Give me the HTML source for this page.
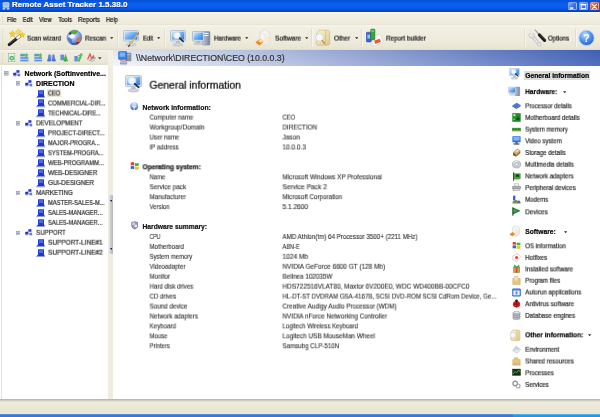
<!DOCTYPE html>
<html lang="en"><head><meta charset="utf-8"><title>Remote Asset Tracker 1.5.38.0</title>
<style>
*{margin:0;padding:0;box-sizing:border-box}
html,body{width:600px;height:417px;overflow:hidden;background:#fff}
body{position:relative;font-family:"Liberation Sans",sans-serif;font-size:6.7px;color:#111;line-height:1}
.a{position:absolute;white-space:nowrap}
.t{position:absolute;white-space:nowrap;line-height:10px;height:10px;transform-origin:0 50%;will-change:transform;-webkit-text-stroke:.2px currentColor}
.b{font-weight:bold}
svg.a{filter:blur(.3px)}
.g{opacity:.55}
#title{left:0;top:0;width:600px;height:11.6px;background:linear-gradient(#0a50d4 0,#0656e4 1.5px,#0a5eee 4px,#0a5eee 7px,#0652e0 9.5px,#0340c0 11.6px)}
#menu{left:0;top:11.6px;width:600px;height:13px;background:linear-gradient(#fdfdfb 0,#f3f1e7 1.6px,#f0eee1 6px,#eeebdc 12px,#e2dfcf 13px)}
#tb1{left:0;top:24.6px;width:600px;height:25.4px;background:linear-gradient(#f6f5ec 0,#f1efe3 3px,#eeebdc 16px,#e7e4d3 24px,#d3d0be 25.4px)}
#tb2{left:0;top:50px;width:108.4px;height:15.4px;background:linear-gradient(#f6f5ee 0,#efecde 2px,#ebe8d7 12px,#dedbc9 15.4px);border-radius:0 1.5px 1.5px 0;box-shadow:.6px 0 0 #d8d5c4}
#hdr{left:112.4px;top:50px;width:487.6px;height:15.6px;background:linear-gradient(rgba(0,10,60,.07),rgba(255,255,255,.06)),linear-gradient(90deg,#f4f6fb 0,#4666bb 100%)}
#tree{left:1px;top:65.6px;width:107.3px;height:333.2px;background:#fff;border-left:1px solid #e6e4d8}
#split{left:108.3px;top:50px;width:4.7px;height:348.6px;background:linear-gradient(#f3f2ea 0,#f1efe5 15px,#efede1 16px)}
#status{left:0;top:398.8px;width:600px;height:15px;background:linear-gradient(#b2b0a2 0,#c4c2b4 1px,#e2dfd0 2.2px,#eeece0 3.4px,#ece8d6 7px,#ebe7d4 14px,#e4e6e6 15px)}
#task{left:0;top:413.6px;width:600px;height:3.4px;background:linear-gradient(#6a9ce8,#3c78d8 40%,#3a74d4)}
#tray{left:512.5px;top:413.6px;width:87.5px;height:3.4px;background:linear-gradient(#6abcf4,#1f9cee 40%,#1c94e6)}
</style></head>
<body>
<div class="a" id="title"></div>
<div class="a" id="menu"></div>
<div class="a" id="tb1"></div>
<div class="a" id="tb2"></div>
<div class="a" id="hdr"></div>
<div class="a" id="split"></div>
<div class="a" id="tree"></div>
<div class="a" id="status"></div>
<div class="a" id="task"></div>
<div class="a" id="tray"></div>
<div class="t b" style="transform:translate(0px,0.1px) scaleX(1.031);left:12px;top:0px;font-size:7.8px;color:#fff;text-shadow:.5px .5px 0 rgba(0,30,120,.6);">Remote Asset Tracker 1.5.38.0</div>
<div class="t " style="transform:translate(0.9px,0px) scaleX(0.900);left:6px;top:15px;">File</div>
<div class="t " style="transform:translate(0.7px,0px) scaleX(0.867);left:22px;top:15px;">Edit</div>
<div class="t " style="transform:translate(0.9px,0px) scaleX(0.890);left:38px;top:15px;">View</div>
<div class="t " style="transform:translate(0.3px,0px) scaleX(0.877);left:58px;top:15px;">Tools</div>
<div class="t " style="transform:translate(0px,0px) scaleX(0.939);left:78px;top:15px;">Reports</div>
<div class="t " style="transform:translate(0px,0px) scaleX(0.872);left:106px;top:15px;">Help</div>
<div class="t " style="transform:translate(0px,0.6px) scaleX(0.933);left:27px;top:33px;">Scan wizard</div>
<div class="t " style="transform:translate(0px,0.6px) scaleX(0.926);left:85px;top:33px;">Rescan</div>
<div class="t " style="transform:translate(0px,0.6px) scaleX(0.867);left:143px;top:33px;">Edit</div>
<div class="t " style="transform:translate(0px,0.6px) scaleX(0.931);left:214px;top:33px;">Hardware</div>
<div class="t " style="transform:translate(0px,0.6px) scaleX(0.985);left:275px;top:33px;">Software</div>
<div class="t " style="transform:translate(0px,0.6px) scaleX(0.956);left:334px;top:33px;">Other</div>
<div class="t " style="transform:translate(0px,0.6px) scaleX(0.952);left:386px;top:33px;">Report builder</div>
<div class="t " style="transform:translate(0px,0.6px) scaleX(0.911);left:548px;top:33px;">Options</div>
<div class="t " style="transform:translate(0px,0.2px) scaleX(1.006);left:136px;top:53px;font-size:8.7px;color:#333;">\\Network\DIRECTION\CEO (10.0.0.3)</div>
<div class="t " style="transform:translate(0.4px,0.7px) scaleX(0.993);left:149px;top:79px;font-size:10.5px;color:#000;-webkit-text-stroke:.22px #000;">General information</div>
<div class="t b" style="transform:translate(0.5px,0.6px) scaleX(1.016);left:142px;top:102px;">Network information:</div>
<div class="t " style="transform:translate(0.6px,0.6px) scaleX(0.911);left:149px;top:112px;color:#2c2c2c;-webkit-text-stroke-width:.1px;">Computer name</div>
<div class="t " style="transform:translate(0.5px,0.6px) scaleX(0.876);left:282px;top:112px;color:#2c2c2c;-webkit-text-stroke-width:.1px;">CEO</div>
<div class="t " style="transform:translate(0.6px,0.53px) scaleX(0.957);left:149px;top:122px;color:#2c2c2c;-webkit-text-stroke-width:.1px;">Workgroup/Domain</div>
<div class="t " style="transform:translate(0.5px,0.53px) scaleX(0.938);left:282px;top:122px;color:#2c2c2c;-webkit-text-stroke-width:.1px;">DIRECTION</div>
<div class="t " style="transform:translate(0.6px,0.46px) scaleX(0.902);left:149px;top:132px;color:#2c2c2c;-webkit-text-stroke-width:.1px;">User name</div>
<div class="t " style="transform:translate(0.5px,0.46px) scaleX(0.974);left:282px;top:132px;color:#2c2c2c;-webkit-text-stroke-width:.1px;">Jason</div>
<div class="t " style="transform:translate(0.6px,0.39px) scaleX(0.910);left:149px;top:142px;color:#2c2c2c;-webkit-text-stroke-width:.1px;">IP address</div>
<div class="t " style="transform:translate(0.5px,0.39px) scaleX(0.968);left:282px;top:142px;color:#2c2c2c;-webkit-text-stroke-width:.1px;">10.0.0.3</div>
<div class="t b" style="transform:translate(0.5px,0.3px) scaleX(0.996);left:142px;top:162px;">Operating system:</div>
<div class="t " style="transform:translate(0.6px,0.3px) scaleX(0.880);left:149px;top:172px;color:#2c2c2c;-webkit-text-stroke-width:.1px;">Name</div>
<div class="t " style="transform:translate(0.5px,0.3px) scaleX(0.942);left:282px;top:172px;color:#2c2c2c;-webkit-text-stroke-width:.1px;">Microsoft Windows XP Professional</div>
<div class="t " style="transform:translate(0.6px,0.23px) scaleX(0.953);left:149px;top:182px;color:#2c2c2c;-webkit-text-stroke-width:.1px;">Service pack</div>
<div class="t " style="transform:translate(0.5px,0.23px) scaleX(0.995);left:282px;top:182px;color:#2c2c2c;-webkit-text-stroke-width:.1px;">Service Pack 2</div>
<div class="t " style="transform:translate(0.6px,0.16px) scaleX(0.919);left:149px;top:192px;color:#2c2c2c;-webkit-text-stroke-width:.1px;">Manufacturer</div>
<div class="t " style="transform:translate(0.5px,0.16px) scaleX(0.932);left:282px;top:192px;color:#2c2c2c;-webkit-text-stroke-width:.1px;">Microsoft Corporation</div>
<div class="t " style="transform:translate(0.6px,0.09px) scaleX(0.896);left:149px;top:202px;color:#2c2c2c;-webkit-text-stroke-width:.1px;">Version</div>
<div class="t " style="transform:translate(0.5px,0.09px) scaleX(0.987);left:282px;top:202px;color:#2c2c2c;-webkit-text-stroke-width:.1px;">5.1.2600</div>
<div class="t b" style="transform:translate(0.5px,0.0px) scaleX(1.003);left:142px;top:222px;">Hardware summary:</div>
<div class="t " style="transform:translate(0.6px,0.0px) scaleX(0.765);left:149px;top:232px;color:#2c2c2c;-webkit-text-stroke-width:.1px;">CPU</div>
<div class="t " style="transform:translate(0.5px,0.0px) scaleX(0.929);left:282px;top:232px;color:#2c2c2c;-webkit-text-stroke-width:.1px;">AMD Athlon(tm) 64 Processor 3500+ (2211 MHz)</div>
<div class="t " style="transform:translate(0.6px,0.93px) scaleX(0.902);left:149px;top:241px;color:#2c2c2c;-webkit-text-stroke-width:.1px;">Motherboard</div>
<div class="t " style="transform:translate(0.5px,0.93px) scaleX(0.873);left:282px;top:241px;color:#2c2c2c;-webkit-text-stroke-width:.1px;">A8N-E</div>
<div class="t " style="transform:translate(0.6px,0.86px) scaleX(0.880);left:149px;top:251px;color:#2c2c2c;-webkit-text-stroke-width:.1px;">System memory</div>
<div class="t " style="transform:translate(0.5px,0.86px) scaleX(0.987);left:282px;top:251px;color:#2c2c2c;-webkit-text-stroke-width:.1px;">1024 Mb</div>
<div class="t " style="transform:translate(0.6px,0.79px) scaleX(0.902);left:149px;top:261px;color:#2c2c2c;-webkit-text-stroke-width:.1px;">Videoadapter</div>
<div class="t " style="transform:translate(0.5px,0.79px) scaleX(0.967);left:282px;top:261px;color:#2c2c2c;-webkit-text-stroke-width:.1px;">NVIDIA GeForce 6600 GT (128 Mb)</div>
<div class="t " style="transform:translate(0.6px,0.72px) scaleX(0.919);left:149px;top:271px;color:#2c2c2c;-webkit-text-stroke-width:.1px;">Monitor</div>
<div class="t " style="transform:translate(0.5px,0.72px) scaleX(0.943);left:282px;top:271px;color:#2c2c2c;-webkit-text-stroke-width:.1px;">Belinea 102035W</div>
<div class="t " style="transform:translate(0.6px,0.65px) scaleX(0.913);left:149px;top:281px;color:#2c2c2c;-webkit-text-stroke-width:.1px;">Hard disk drives</div>
<div class="t " style="transform:translate(0.5px,0.65px) scaleX(0.966);left:282px;top:281px;color:#2c2c2c;-webkit-text-stroke-width:.1px;">HDS722516VLAT80, Maxtor 6V200E0, WDC WD400BB-00CFC0</div>
<div class="t " style="transform:translate(0.6px,0.58px) scaleX(0.903);left:149px;top:291px;color:#2c2c2c;-webkit-text-stroke-width:.1px;">CD drives</div>
<div class="t " style="transform:translate(0.5px,0.58px) scaleX(0.914);left:282px;top:291px;color:#2c2c2c;-webkit-text-stroke-width:.1px;">HL-DT-ST DVDRAM GSA-4167B, SCSI DVD-ROM SCSI CdRom Device, Ge...</div>
<div class="t " style="transform:translate(0.6px,0.51px) scaleX(0.933);left:149px;top:301px;color:#2c2c2c;-webkit-text-stroke-width:.1px;">Sound device</div>
<div class="t " style="transform:translate(0.5px,0.51px) scaleX(0.948);left:282px;top:301px;color:#2c2c2c;-webkit-text-stroke-width:.1px;">Creative Audigy Audio Processor (WDM)</div>
<div class="t " style="transform:translate(0.6px,0.44px) scaleX(0.925);left:149px;top:311px;color:#2c2c2c;-webkit-text-stroke-width:.1px;">Network adapters</div>
<div class="t " style="transform:translate(0.5px,0.44px) scaleX(0.944);left:282px;top:311px;color:#2c2c2c;-webkit-text-stroke-width:.1px;">NVIDIA nForce Networking Controller</div>
<div class="t " style="transform:translate(0.6px,0.37px) scaleX(0.918);left:149px;top:321px;color:#2c2c2c;-webkit-text-stroke-width:.1px;">Keyboard</div>
<div class="t " style="transform:translate(0.5px,0.37px) scaleX(0.907);left:282px;top:321px;color:#2c2c2c;-webkit-text-stroke-width:.1px;">Logitech Wireless Keyboard</div>
<div class="t " style="transform:translate(0.6px,0.3px) scaleX(0.892);left:149px;top:331px;color:#2c2c2c;-webkit-text-stroke-width:.1px;">Mouse</div>
<div class="t " style="transform:translate(0.5px,0.3px) scaleX(0.956);left:282px;top:331px;color:#2c2c2c;-webkit-text-stroke-width:.1px;">Logitech USB MouseMan Wheel</div>
<div class="t " style="transform:translate(0.6px,0.23px) scaleX(0.876);left:149px;top:341px;color:#2c2c2c;-webkit-text-stroke-width:.1px;">Printers</div>
<div class="t " style="transform:translate(0.5px,0.23px) scaleX(0.924);left:282px;top:341px;color:#2c2c2c;-webkit-text-stroke-width:.1px;">Samsubg CLP-510N</div>
<div class="t b" style="transform:translate(0.6px,0.6px) scaleX(1.042);left:24px;top:68px;color:#000;">Network (Softinventive...</div>
<div class="t b" style="transform:translate(0.1px,0.55px) scaleX(1.044);left:36px;top:78px;color:#000;">DIRECTION</div>
<div class="a" style="left:46.6px;top:89.40px;width:14.6px;height:8px;background:#e9e6d4"></div>
<div class="t " style="transform:translate(0px,0.5px) scaleX(0.834);left:48px;top:88px;color:#2a2a2a;">CEO</div>
<div class="t " style="transform:translate(0px,0.45px) scaleX(0.891);left:48px;top:98px;color:#2a2a2a;">COMMERCIAL-DIR...</div>
<div class="t " style="transform:translate(0px,0.4px) scaleX(0.856);left:48px;top:108px;color:#2a2a2a;">TECHNICAL-DIRE...</div>
<div class="t " style="transform:translate(0.1px,0.35px) scaleX(0.918);left:36px;top:118px;color:#2a2a2a;">DEVELOPMENT</div>
<div class="t " style="transform:translate(0px,0.3px) scaleX(0.901);left:48px;top:128px;color:#2a2a2a;">PROJECT-DIRECT...</div>
<div class="t " style="transform:translate(0px,0.25px) scaleX(0.860);left:48px;top:138px;color:#2a2a2a;">MAJOR-PROGRA...</div>
<div class="t " style="transform:translate(0px,0.2px) scaleX(0.863);left:48px;top:148px;color:#2a2a2a;">SYSTEM-PROGRA...</div>
<div class="t " style="transform:translate(0px,0.15px) scaleX(0.886);left:48px;top:158px;color:#2a2a2a;">WEB-PROGRAMM...</div>
<div class="t " style="transform:translate(0px,0.1px) scaleX(0.945);left:48px;top:168px;color:#2a2a2a;">WEB-DESIGNER</div>
<div class="t " style="transform:translate(0px,0.05px) scaleX(0.938);left:48px;top:178px;color:#2a2a2a;">GUI-DESIGNER</div>
<div class="t " style="transform:translate(0.1px,0.0px) scaleX(0.925);left:36px;top:188px;color:#2a2a2a;">MARKETING</div>
<div class="t " style="transform:translate(0px,0.95px) scaleX(0.870);left:48px;top:197px;color:#2a2a2a;">MASTER-SALES-M...</div>
<div class="t " style="transform:translate(0px,0.9px) scaleX(0.864);left:48px;top:207px;color:#2a2a2a;">SALES-MANAGER...</div>
<div class="t " style="transform:translate(0px,0.85px) scaleX(0.864);left:48px;top:217px;color:#2a2a2a;">SALES-MANAGER...</div>
<div class="t " style="transform:translate(0.1px,0.8px) scaleX(0.919);left:36px;top:227px;color:#2a2a2a;">SUPPORT</div>
<div class="t " style="transform:translate(0px,0.75px) scaleX(0.969);left:48px;top:237px;color:#2a2a2a;">SUPPORT-LINE#1</div>
<div class="t " style="transform:translate(0px,0.7px) scaleX(0.969);left:48px;top:247px;color:#2a2a2a;">SUPPORT-LINE#2</div>
<div class="a" style="left:524.4px;top:71px;width:66px;height:9px;background:#dcdcdc;filter:blur(.3px)"></div>
<div class="t b" style="transform:translate(0.3px,0.8px) scaleX(1.004);left:525px;top:70px;color:#000;">General information</div>
<div class="t b" style="transform:translate(0.2px,0.1px) scaleX(0.978);left:525px;top:87px;color:#000;">Hardware:</div>
<div class="t " style="transform:translate(0.2px,0.3px) scaleX(0.906);left:525px;top:101px;color:#2a2a2a;">Processor details</div>
<div class="t " style="transform:translate(0.2px,0.9px) scaleX(0.922);left:525px;top:112px;color:#2a2a2a;">Motherboard details</div>
<div class="t " style="transform:translate(0.2px,0.6px) scaleX(0.880);left:525px;top:124px;color:#2a2a2a;">System memory</div>
<div class="t " style="transform:translate(0.2px,0.3px) scaleX(0.912);left:525px;top:136px;color:#2a2a2a;">Video system</div>
<div class="t " style="transform:translate(0.2px,0.0px) scaleX(0.908);left:525px;top:148px;color:#2a2a2a;">Storage details</div>
<div class="t " style="transform:translate(0.2px,0.7px) scaleX(0.906);left:525px;top:159px;color:#2a2a2a;">Multimedia details</div>
<div class="t " style="transform:translate(0.2px,0.4px) scaleX(0.925);left:525px;top:171px;color:#2a2a2a;">Network adapters</div>
<div class="t " style="transform:translate(0.2px,0.1px) scaleX(0.918);left:525px;top:183px;color:#2a2a2a;">Peripheral devices</div>
<div class="t " style="transform:translate(0.2px,0.8px) scaleX(0.896);left:525px;top:194px;color:#2a2a2a;">Modems</div>
<div class="t " style="transform:translate(0.2px,0.3px) scaleX(0.946);left:525px;top:207px;color:#2a2a2a;">Devices</div>
<div class="t b" style="transform:translate(0.2px,0.2px) scaleX(1.001);left:525px;top:227px;color:#000;">Software:</div>
<div class="t " style="transform:translate(0.2px,0.3px) scaleX(0.908);left:525px;top:241px;color:#2a2a2a;">OS information</div>
<div class="t " style="transform:translate(0.2px,0.9px) scaleX(0.910);left:525px;top:252px;color:#2a2a2a;">Hotfixes</div>
<div class="t " style="transform:translate(0.2px,0.4px) scaleX(0.922);left:525px;top:264px;color:#2a2a2a;">Installed software</div>
<div class="t " style="transform:translate(0.2px,0.8px) scaleX(0.888);left:525px;top:275px;color:#2a2a2a;">Program files</div>
<div class="t " style="transform:translate(0.2px,0.5px) scaleX(0.924);left:525px;top:287px;color:#2a2a2a;">Autorun applications</div>
<div class="t " style="transform:translate(0.2px,0.2px) scaleX(0.928);left:525px;top:299px;color:#2a2a2a;">Antivirus software</div>
<div class="t " style="transform:translate(0.2px,0.9px) scaleX(0.927);left:525px;top:310px;color:#2a2a2a;">Database engines</div>
<div class="t b" style="transform:translate(0.2px,0.3px) scaleX(0.988);left:525px;top:330px;color:#000;">Other information:</div>
<div class="t " style="transform:translate(0.2px,0.8px) scaleX(0.906);left:525px;top:344px;color:#2a2a2a;">Environment</div>
<div class="t " style="transform:translate(0.2px,0.5px) scaleX(0.919);left:525px;top:356px;color:#2a2a2a;">Shared resources</div>
<div class="t " style="transform:translate(0.2px,0.2px) scaleX(0.912);left:525px;top:368px;color:#2a2a2a;">Processes</div>
<div class="t " style="transform:translate(0.2px,0.9px) scaleX(0.916);left:525px;top:379px;color:#2a2a2a;">Services</div>
<svg width="0" height="0" style="position:absolute"><defs>
<linearGradient id="gscr" x1="0" y1="0" x2="1" y2="1"><stop offset="0" stop-color="#d4ecff"/><stop offset=".5" stop-color="#6aaef2"/><stop offset="1" stop-color="#2f78d8"/></linearGradient>
<radialGradient id="gglobe" cx=".35" cy=".3" r=".8"><stop offset="0" stop-color="#eef6ff"/><stop offset=".4" stop-color="#9cbcf0"/><stop offset="1" stop-color="#3f62c8"/></radialGradient>
<radialGradient id="ghelp" cx=".4" cy=".3" r=".8"><stop offset="0" stop-color="#c4e2ff"/><stop offset=".45" stop-color="#5598f2"/><stop offset="1" stop-color="#1f55c4"/></radialGradient>
<linearGradient id="gfold" x1="0" y1="0" x2="1" y2="1"><stop offset="0" stop-color="#fbf4d8"/><stop offset="1" stop-color="#e2c987"/></linearGradient>
<linearGradient id="gtower" x1="0" y1="0" x2="1" y2="0"><stop offset="0" stop-color="#c4cada"/><stop offset="1" stop-color="#77829c"/></linearGradient>
<radialGradient id="gnet" cx=".5" cy=".2" r=".85"><stop offset="0" stop-color="#e6f4ff"/><stop offset=".45" stop-color="#8ab4f2"/><stop offset="1" stop-color="#3350c4"/></radialGradient>
</defs></svg>
<svg class="a" style="left:2px;top:2px;" width="8" height="8" viewBox="0 0 8 8"><rect x="1" y="0.5" width="6" height="4.5" rx=".6" fill="#9fc0ee" stroke="#dfe9fa" stroke-width=".6"/><rect x="0.6" y="5.4" width="2.6" height="2.2" fill="#b7cdef"/><rect x="4.8" y="5.4" width="2.6" height="2.2" fill="#b7cdef"/><rect x="3.6" y="4.6" width=".8" height="1.6" fill="#dfe9fa"/></svg>
<div class="a" style="left:568px;top:1.5px;width:8.8px;height:8.8px;border-radius:1.6px;background:linear-gradient(135deg,#8ab2fa,#4378ea 45%,#2a5cd8);border:.7px solid rgba(255,255,255,.38)"></div>
<div class="a" style="left:579.2px;top:1.5px;width:8.8px;height:8.8px;border-radius:1.6px;background:linear-gradient(135deg,#8ab2fa,#4378ea 45%,#2a5cd8);border:.7px solid rgba(255,255,255,.38)"></div>
<div class="a" style="left:590px;top:1.5px;width:8.8px;height:8.8px;border-radius:1.6px;background:linear-gradient(135deg,#f0a088,#e0502c 45%,#c23a1e);border:.7px solid rgba(255,255,255,.38)"></div>
<svg class="a" style="left:568px;top:1.5px;" width="9" height="9" viewBox="0 0 9 9"><rect x="2" y="5.4" width="3.4" height="1.4" fill="#fff"/></svg>
<svg class="a" style="left:579.2px;top:1.5px;" width="9" height="9" viewBox="0 0 9 9"><rect x="2.2" y="2.4" width="4.6" height="4.2" fill="none" stroke="#fff" stroke-width=".9"/><rect x="2.2" y="2.2" width="4.6" height="1.2" fill="#fff"/></svg>
<svg class="a" style="left:590px;top:1.5px;" width="9" height="9" viewBox="0 0 9 9"><path d="M2.6 2.6l3.8 3.8M6.4 2.6L2.6 6.4" stroke="#fff" stroke-width="1.3" stroke-linecap="round"/></svg>
<svg class="a g" style="left:2px;top:14px;" width="2" height="9.6" viewBox="0 0 2 9.6"><rect x="0" y="0.0" width="1.1" height="1.1" fill="#c6c2b0"/><rect x="0" y="2.4" width="1.1" height="1.1" fill="#c6c2b0"/><rect x="0" y="4.8" width="1.1" height="1.1" fill="#c6c2b0"/><rect x="0" y="7.199999999999999" width="1.1" height="1.1" fill="#c6c2b0"/></svg>
<svg class="a g" style="left:2px;top:29px;" width="2" height="19.2" viewBox="0 0 2 19.2"><rect x="0" y="0.0" width="1.1" height="1.1" fill="#c6c2b0"/><rect x="0" y="2.4" width="1.1" height="1.1" fill="#c6c2b0"/><rect x="0" y="4.8" width="1.1" height="1.1" fill="#c6c2b0"/><rect x="0" y="7.199999999999999" width="1.1" height="1.1" fill="#c6c2b0"/><rect x="0" y="9.6" width="1.1" height="1.1" fill="#c6c2b0"/><rect x="0" y="12.0" width="1.1" height="1.1" fill="#c6c2b0"/><rect x="0" y="14.399999999999999" width="1.1" height="1.1" fill="#c6c2b0"/><rect x="0" y="16.8" width="1.1" height="1.1" fill="#c6c2b0"/></svg>
<svg class="a g" style="left:2px;top:53px;" width="2" height="12.0" viewBox="0 0 2 12.0"><rect x="0" y="0.0" width="1.1" height="1.1" fill="#c6c2b0"/><rect x="0" y="2.4" width="1.1" height="1.1" fill="#c6c2b0"/><rect x="0" y="4.8" width="1.1" height="1.1" fill="#c6c2b0"/><rect x="0" y="7.199999999999999" width="1.1" height="1.1" fill="#c6c2b0"/><rect x="0" y="9.6" width="1.1" height="1.1" fill="#c6c2b0"/></svg>
<svg class="a" style="left:7px;top:27px;" width="19" height="20" viewBox="0 0 19 20"><path d="M2.2 17.6L12.6 9.2" stroke="#1a1a1a" stroke-width="3.1" stroke-linecap="round"/><path d="M10.4 11l2.2-1.8" stroke="#f4f4f4" stroke-width="2.6" stroke-linecap="round"/><path d="M2.6 16.6L9 11.5" stroke="#666" stroke-width=".7"/><path transform="translate(0,1.1)" d="M5.5 2.5l1 2.1 2.3.3-1.7 1.6.4 2.3-2-1.1-2 1.1.4-2.3L2.2 4.9l2.3-.3z" fill="#f6d21a" stroke="#d9a800" stroke-width=".4"/><path transform="translate(0,1.1)" d="M11.5 0.8l.9 1.8 2 .3-1.5 1.4.4 2-1.8-1-1.8 1 .4-2L8.6 2.9l2-.3z" fill="#fbe24a" stroke="#d9a800" stroke-width=".4"/><path d="M15.3 5.2l.8 1.7 1.9.3-1.4 1.3.3 1.9-1.6-.9-1.7.9.3-1.9-1.3-1.3 1.8-.3z" fill="#f6d21a" stroke="#d9a800" stroke-width=".4"/></svg>
<svg class="a" style="left:66px;top:29px;" width="17" height="17" viewBox="0 0 17 17"><circle cx="8.4" cy="8.5" r="7.4" fill="url(#gglobe)" stroke="#5a74b8" stroke-width=".5"/><path d="M2.6 5.2C3.6 2.6 6 1.2 8.6 1.200c1.4 0 2.4.4 3.2 1L10.4 4.800C9 5.6 7 5.4 5.8 4.400z" fill="#5aa53c"/><path d="M2.6 5.200c.4-1 1-1.8 1.8-2.400l1.4 1.6-1.2 1.600z" fill="#2d5a2a"/><path d="M10.6 9.6c.8-1.2 2.4-1.4 3.8-.6.4 1.4.2 2.800-.6 4-1.400.2-2.400-.2-3-1.200z" fill="#e8683a"/><path d="M1.4 9c.6 2.400 2 4.200 4 5.200 1-1.400.8-3.400-.4-4.600C4 8.800 2.600 8.600 1.400 9z" fill="#4a68d0" opacity=".85"/><path d="M10.2 12.400c1 .8 2.4 1.2 3.6.8-.8 1.2-2 2-3.4 2.400z" fill="#8a2a2a"/><path d="M5 13.400c1.4.8 3 .8 4.4.2l.4 2.200c-1.8.4-3.6 0-5-1z" fill="#2a6a7a"/><ellipse cx="6.2" cy="7.6" rx="2.8" ry="2" fill="#fff" opacity=".75"/></svg>
<svg class="a" style="left:110.3px;top:37.2px;" width="3.4" height="2.4" viewBox="0 0 3.4 2.4"><path d="M0 0.2h3.4L1.7 2.1z" fill="#222"/></svg>
<div class="a" style="left:117px;top:28.5px;width:.8px;height:18.5px;background:#e2dfcf"></div><div class="a" style="left:117.8px;top:28.5px;width:.8px;height:18.5px;background:#f6f5ee"></div>
<svg class="a" style="left:123px;top:29.5px;" width="16.0" height="17.0" viewBox="0 0 16 17"><rect x="0.5" y="0.5" width="15" height="10.5" rx="1" fill="#e9edf3" stroke="#9aa6ba" stroke-width=".6"/><rect x="1.6" y="1.6" width="12.8" height="8" fill="url(#gscr)"/><rect x="6" y="11" width="4" height="2.6" fill="#b9c0cc"/><ellipse cx="8" cy="14.6" rx="5.2" ry="1.6" fill="#cfd4dd" stroke="#a4abb8" stroke-width=".4"/><path d="M15.4 3.2L6.2 15.6" stroke="#e8b458" stroke-width="1.2" stroke-linecap="round"/><path d="M15.6 3L14.6 4.3" stroke="#c9604a" stroke-width="1.3" stroke-linecap="round"/><path d="M6.6 15l-1 1.4" stroke="#333" stroke-width="1.1" stroke-linecap="round"/></svg>
<svg class="a" style="left:157.3px;top:37.2px;" width="3.4" height="2.4" viewBox="0 0 3.4 2.4"><path d="M0 0.2h3.4L1.7 2.1z" fill="#222"/></svg>
<div class="a" style="left:164px;top:28.5px;width:.8px;height:18.5px;background:#e2dfcf"></div><div class="a" style="left:164.8px;top:28.5px;width:.8px;height:18.5px;background:#f6f5ee"></div>
<svg class="a" style="left:169.5px;top:29.5px;" width="16.0" height="17.0" viewBox="0 0 16 17"><rect x="0.5" y="0.5" width="15" height="10.5" rx="1" fill="#e9edf3" stroke="#9aa6ba" stroke-width=".6"/><rect x="1.6" y="1.6" width="12.8" height="8" fill="url(#gscr)"/><rect x="6" y="11" width="4" height="2.6" fill="#b9c0cc"/><ellipse cx="8" cy="14.6" rx="5.2" ry="1.6" fill="#cfd4dd" stroke="#a4abb8" stroke-width=".4"/><circle cx="7" cy="5.4" r="3.4" fill="#f2f7fd" stroke="#d0d8e6" stroke-width=".8"/><path d="M9.6 8.2l3.6 3.2" stroke="#2a2f3a" stroke-width="1.7" stroke-linecap="round"/></svg>
<svg class="a" style="left:192px;top:30px;" width="19" height="16" viewBox="0 0 19 16"><rect x="10.5" y="1.5" width="7.4" height="13.6" rx=".8" fill="url(#gtower)" stroke="#7d8596" stroke-width=".5"/><rect x="11.6" y="3" width="5" height="1" fill="#eef0f5"/><rect x="11.6" y="5" width="5" height="1" fill="#eef0f5"/><rect x="0.5" y="1.5" width="11.6" height="9.6" rx=".8" fill="#dfe4ee" stroke="#8b97ae" stroke-width=".5"/><rect x="1.6" y="2.6" width="9.4" height="7.2" fill="url(#gscr)"/><rect x="4.6" y="11.1" width="3.4" height="1.8" fill="#aab2c2"/><rect x="2" y="12.7" width="8.6" height="1.8" rx=".8" fill="#c6ccd8" stroke="#9aa2b2" stroke-width=".3"/></svg>
<svg class="a" style="left:245.3px;top:37.2px;" width="3.4" height="2.4" viewBox="0 0 3.4 2.4"><path d="M0 0.2h3.4L1.7 2.1z" fill="#222"/></svg>
<svg class="a" style="left:254.5px;top:28.5px;" width="16" height="18" viewBox="0 0 16 18"><path d="M5 3.2L9.6 0.6l5.2 3.2v9.6L9.8 16.6 5 13.6z" fill="#f4f4f2" stroke="#cfcfca" stroke-width=".5"/><path d="M9.8 6.2v10.4" stroke="#dcdcd6" stroke-width=".5"/><path d="M5 3.2l4.8 3 5-2.4" fill="none" stroke="#d8d8d2" stroke-width=".5"/><path d="M0.8 13.2l4-2.6 3.4 2.4-3.8 3.2z" fill="#f08a1c" stroke="#c96a10" stroke-width=".4"/><path d="M3 12.2l3.2-2.4 2.6 1.6-2.6 2.4z" fill="#fbd9a8"/><path d="M10.6 8.4l3.6-2v6.2l-3.6 2.2z" fill="#fbe3c4" opacity=".8"/></svg>
<svg class="a" style="left:304.8px;top:37.2px;" width="3.4" height="2.4" viewBox="0 0 3.4 2.4"><path d="M0 0.2h3.4L1.7 2.1z" fill="#222"/></svg>
<div class="a" style="left:311px;top:28.5px;width:.8px;height:18.5px;background:#e2dfcf"></div><div class="a" style="left:311.8px;top:28.5px;width:.8px;height:18.5px;background:#f6f5ee"></div>
<svg class="a" style="left:314px;top:28.5px;" width="17" height="18" viewBox="0 0 17 18"><path d="M5.2 1.2h8.2c1.4 0 2.2 1 2.2 2.2v10.8c0 1.2-.8 2-2 2H4.4c-1.2 0-2-.8-2-2V5z" fill="url(#gfold)" stroke="#c2a658" stroke-width=".5"/><path d="M11.6 1.4v14.6" stroke="#c9ad5c" stroke-width=".5"/><circle cx="5.6" cy="8.4" r="3.9" fill="#f6f7fa" stroke="#d2d4da" stroke-width=".9"/><path d="M8.2 11.6l2.2 2.6" stroke="#b09a5c" stroke-width="1.4" stroke-linecap="round"/></svg>
<svg class="a" style="left:354.8px;top:37.2px;" width="3.4" height="2.4" viewBox="0 0 3.4 2.4"><path d="M0 0.2h3.4L1.7 2.1z" fill="#222"/></svg>
<div class="a" style="left:361px;top:28.5px;width:.8px;height:18.5px;background:#e2dfcf"></div><div class="a" style="left:361.8px;top:28.5px;width:.8px;height:18.5px;background:#f6f5ee"></div>
<svg class="a" style="left:364.5px;top:27.5px;" width="19" height="19" viewBox="0 0 19 19"><path d="M5.6 8.8l9.6-2.4 3.2 8-9.8 3.6z" fill="#fbfbfb" stroke="#cfcfcf" stroke-width=".5"/><path d="M9 12.8l5.6-2 1.4 3-5.6 2.2z" fill="#ee5a2a"/><rect x="1.2" y="4.2" width="5.2" height="9.8" rx="1" fill="#3563c8" stroke="#1f3f94" stroke-width=".4"/><rect x="5.6" y="1" width="4.4" height="11" rx="1" fill="#3ea23a" stroke="#26702a" stroke-width=".4"/><rect x="2.4" y="6.6" width="2.6" height="4" fill="#9fbaf0"/><path d="M6.4 3h2.6" stroke="#b7e2a8" stroke-width="1"/></svg>
<div class="a" style="left:524px;top:28.5px;width:.8px;height:18.5px;background:#e2dfcf"></div><div class="a" style="left:524.8px;top:28.5px;width:.8px;height:18.5px;background:#f6f5ee"></div>
<svg class="a" style="left:527.5px;top:29px;" width="19" height="18" viewBox="0 0 19 18"><path d="M4.6 7.6L10.8 14.8" stroke="#a9afb9" stroke-width="3.2" stroke-linecap="round"/><path d="M4.6 7.6L10.8 14.8" stroke="#e3e6ea" stroke-width="2.2" stroke-linecap="round"/><circle cx="3.5" cy="6.3" r="2.7" fill="#e3e6ea" stroke="#a9afb9" stroke-width=".5"/><path d="M0.2 2.6L3.8 6 5.4 3.4 2.6 0.8z" fill="#eeebdc"/><circle cx="11.3" cy="15.3" r="1.9" fill="#e3e6ea" stroke="#a9afb9" stroke-width=".5"/><path d="M7.2 1L11.4 5.9" stroke="#8d939d" stroke-width="1.1" stroke-linecap="round"/><path d="M11.4 5.9L16.6 11.3" stroke="#1c1c1c" stroke-width="3.1" stroke-linecap="round"/><path d="M12.2 5.6L16.8 10.4" stroke="#6a6a6a" stroke-width=".6" stroke-linecap="round"/></svg>
<div class="a" style="left:575px;top:28.5px;width:.8px;height:18.5px;background:#e2dfcf"></div><div class="a" style="left:575.8px;top:28.5px;width:.8px;height:18.5px;background:#f6f5ee"></div>
<svg class="a" style="left:577.3px;top:27.7px;" width="19" height="19" viewBox="0 0 19 19"><circle cx="9.5" cy="9.9" r="7.7" fill="url(#ghelp)" stroke="#c4d6f4" stroke-width=".9"/><text x="9.5" y="13.6" font-family="Liberation Sans, sans-serif" font-weight="bold" font-size="10.5" fill="#fff" text-anchor="middle">?</text></svg>
<svg class="a" style="left:7.5px;top:52.9px;opacity:.82;" width="8" height="9.5" viewBox="0 0 8 9.5"><rect x=".6" y=".4" width="6.2" height="8.4" fill="#e9f3ea" stroke="#6f9fb8" stroke-width=".6"/><circle cx="3.8" cy="5.2" r="2.4" fill="#36b23a"/><path d="M2.8 5.200h2M3.8 4.200v2" stroke="#dff5df" stroke-width=".7"/></svg>
<svg class="a" style="left:20px;top:53.199999999999996px;opacity:.82;" width="8.8" height="9" viewBox="0 0 8.8 9"><rect x=".3" y=".8" width="4.6" height="2.6" fill="#3a8abc"/><rect x=".3" y="4.2" width="8.2" height="1.7" fill="#3c7fd8"/><rect x=".3" y="6.7" width="8.2" height="1.7" fill="#3c7fd8"/><rect x=".3" y="5.9" width="8.2" height=".8" fill="#a9c8f0"/><path d="M6.400 0l2.400 2.600h-1.300v2h-2.200v-2H4z" fill="#35b83c"/></svg>
<svg class="a" style="left:33.6px;top:53.199999999999996px;opacity:.82;" width="8.8" height="9" viewBox="0 0 8.8 9"><rect x=".3" y=".8" width="4.6" height="2.6" fill="#3a8abc"/><rect x=".3" y="4.2" width="8.2" height="1.7" fill="#3c7fd8"/><rect x=".3" y="6.7" width="8.2" height="1.7" fill="#3c7fd8"/><rect x=".3" y="5.9" width="8.2" height=".8" fill="#a9c8f0"/><path d="M6.400 0l2.400 2.600h-1.300v2h-2.200v-2H4z" fill="#35b83c"/></svg>
<svg class="a" style="left:46.6px;top:52.9px;opacity:.82;" width="9" height="9.5" viewBox="0 0 9 9.5"><path d="M1.6 1.400h2l.8 6.400H.4zM5.4 1.400h2l1 6.400H4.800z" fill="#3a6fd8"/><rect x="3.4" y="2.6" width="2.2" height="2" fill="#7fa6ea"/><rect x=".4" y="6.4" width="3.4" height="2" fill="#2a54b8"/><rect x="5" y="6.4" width="3.6" height="2" fill="#2a54b8"/></svg>
<svg class="a" style="left:60px;top:52.9px;opacity:.82;" width="8.5" height="9.5" viewBox="0 0 8.5 9.5"><rect x=".4" y="1.6" width="3.6" height="5.6" fill="#3c7fd8"/><path d="M5.4 .4l2.8 7.800H3.400z" fill="#2fa83a"/><rect x="4.6" y="4.6" width="1.6" height="4" fill="#2a8a34"/></svg>
<svg class="a" style="left:73.6px;top:52.9px;opacity:.82;" width="9" height="9.5" viewBox="0 0 9 9.5"><rect x=".4" y="3" width="3.4" height="5.4" fill="#3c7fd8"/><path d="M3.8 8.600L6.4 .6h2.200L5.6 8.600z" fill="#2fa83a"/><rect x="4" y="1.8" width="4.4" height="1.2" fill="#43b84c"/><rect x="4" y="4.4" width="3.4" height="1.2" fill="#43b84c"/></svg>
<svg class="a" style="left:87px;top:52.9px;opacity:.82;" width="9" height="9.5" viewBox="0 0 9 9.5"><path d="M.6 6.600L3 1l1.6 4.800L6.4 3l.8 2.6" fill="none" stroke="#e23a2a" stroke-width="1.3"/><path d="M2.6 8.200c2-2.6 4-3.4 6-3.2" fill="none" stroke="#8a8f98" stroke-width="1.3"/><path d="M4.6 8.600l3.4-1.6" stroke="#9aa0a8" stroke-width="1"/></svg>
<svg class="a" style="left:98.3px;top:56.8px;opacity:.82;" width="4" height="3" viewBox="0 0 4 3"><path d="M0 .3h3.600L1.8 2.400z" fill="#222"/></svg>
<svg class="a" style="left:118px;top:51px;" width="14" height="14.5" viewBox="0 0 14 14.5"><rect x="8.3" y="2" width="4.8" height="8" rx=".5" fill="#8f959f" stroke="#6f7580" stroke-width=".4"/><rect x="9" y="3" width="3.4" height=".8" fill="#c9ccd2"/><rect x=".5" y=".5" width="8.3" height="8" rx=".8" fill="#3b7fe2" stroke="#2b5fc0" stroke-width=".5"/><rect x="1.6" y="1.6" width="5.4" height="4.2" rx=".4" fill="#7ab6f6"/><path d="M2.4 9.4c2 .9 4.6 1 7-.2" stroke="#b0506a" stroke-width=".8" fill="none"/><rect x="2" y="10.6" width="7.2" height="3" rx=".8" fill="#8fa0bc"/><rect x="2.6" y="11.2" width="5.800" height="1" fill="#bcc8dc"/></svg>
<svg class="a" style="left:125px;top:74.5px;" width="16.96" height="18.02" viewBox="0 0 16 17"><rect x="0.5" y="0.5" width="15" height="10.5" rx="1" fill="#e9edf3" stroke="#9aa6ba" stroke-width=".6"/><rect x="1.6" y="1.6" width="12.8" height="8" fill="url(#gscr)"/><rect x="6" y="11" width="4" height="2.6" fill="#b9c0cc"/><ellipse cx="8" cy="14.6" rx="5.2" ry="1.6" fill="#cfd4dd" stroke="#a4abb8" stroke-width=".4"/><circle cx="6.6" cy="5.4" r="3.5" fill="#f4f8fd" stroke="#d5dce8" stroke-width=".8"/><path d="M9.3 8.300l3.6 3.3" stroke="#2a2f3a" stroke-width="1.7" stroke-linecap="round"/></svg>
<svg class="a" style="left:130.3px;top:102.4px;" width="8.4" height="8.4" viewBox="0 0 8 8"><circle cx="4" cy="4" r="3.7" fill="url(#gnet)"/><path d="M2 3.4L4 5.2 6 3.4M4 5.200V7.400" stroke="#f2f7ff" stroke-width="1.100" fill="none" opacity=".9"/></svg>
<svg class="a" style="left:129.8px;top:161.4px;" width="9.4" height="9.4" viewBox="0 0 8 8"><path d="M.6 1.400c1-.6 2-.6 3 0v2.400c-1-.6-2-.6-3 0z" fill="#e8412a"/><path d="M4.2 1.400c1 .6 2 .6 3.2 0v2.400c-1.2.6-2.2.6-3.2 0z" fill="#48b03c"/><path d="M.6 4.400c1-.6 2-.6 3 0v2.600c-1-.6-2-.6-3 0z" fill="#2f6be0"/><path d="M4.2 4.400c1 .6 2 .6 3.2 0v2.600c-1.2.6-2.2.6-3.2 0z" fill="#f2c21c"/></svg>
<svg class="a" style="left:130.6px;top:221px;" width="7.4" height="8.8" viewBox="0 0 8 8.5"><path d="M.8 1l3.200-.8 3.200.8v3.400c0 2-1.400 3.200-3.200 3.800C2.200 7.600.8 6.400.8 4.400z" fill="#9a9cc2" stroke="#5c5f92" stroke-width=".7"/><path d="M1.400 1.400l2.600-.6v3H1.400z" fill="#d4d6e8"/><rect x="4" y="3.600" width="2.400" height="2.400" fill="#eef0f8"/></svg>
<svg class="a" style="left:508.6px;top:68.3px;" width="11.2" height="11.9" viewBox="0 0 16 17"><rect x="0.5" y="0.5" width="15" height="10.5" rx="1" fill="#e9edf3" stroke="#9aa6ba" stroke-width=".6"/><rect x="1.6" y="1.6" width="12.8" height="8" fill="url(#gscr)"/><rect x="6" y="11" width="4" height="2.6" fill="#b9c0cc"/><ellipse cx="8" cy="14.6" rx="5.2" ry="1.6" fill="#cfd4dd" stroke="#a4abb8" stroke-width=".4"/><circle cx="6.6" cy="5.4" r="3.5" fill="#f4f8fd" stroke="#d5dce8" stroke-width=".8"/><path d="M9.3 8.300l3.6 3.3" stroke="#2a2f3a" stroke-width="1.7" stroke-linecap="round"/></svg>
<svg class="a" style="left:508.4px;top:85.8px;" width="12.5" height="10.5" viewBox="0 0 19 16"><rect x="10.5" y="1.5" width="7.4" height="13.6" rx=".8" fill="url(#gtower)" stroke="#7d8596" stroke-width=".5"/><rect x="0.5" y="1.5" width="11.6" height="9.6" rx=".8" fill="#dfe4ee" stroke="#8b97ae" stroke-width=".5"/><rect x="1.6" y="2.6" width="9.4" height="7.2" fill="url(#gscr)"/><rect x="4.6" y="11.1" width="3.4" height="1.8" fill="#aab2c2"/><rect x="2" y="12.7" width="8.6" height="1.8" rx=".8" fill="#c6ccd8"/></svg>
<svg class="a" style="left:511.5px;top:101.0px;" width="9" height="9" viewBox="0 0 9 9"><path d="M.4 4.400L4.6 1.800l4 2.2-4.2 2.800z" fill="#4a76d8"/><path d="M.4 4.400v1.200l4 2.400V6.800z" fill="#2a4aa0"/><path d="M8.6 4v1.200L4.4 8V6.800z" fill="#35589c"/></svg>
<svg class="a" style="left:511.5px;top:112.5px;" width="9" height="9" viewBox="0 0 9 9"><rect x=".3" y=".2" width="8.4" height="8.6" fill="#1f8a2a"/><rect x="1.4" y="1.2" width="2" height="2" fill="#d9f2d0"/><rect x="4.6" y="4.6" width="2.8" height="2.6" fill="#0f4a18"/><rect x="1.4" y="5.6" width="1.6" height="1.2" fill="#8fd48a"/></svg>
<svg class="a" style="left:511.5px;top:124.5px;" width="9" height="9" viewBox="0 0 9 9"><rect x="0" y="2.8" width="9" height="3.2" fill="#58a84c"/><rect x=".8" y="3.4" width="1.8" height="1.6" fill="#2d6e2a"/><rect x="3.4" y="3.4" width="1.8" height="1.6" fill="#2d6e2a"/><rect x="6" y="3.4" width="1.8" height="1.6" fill="#2d6e2a"/><rect x="0" y="5.8" width="9" height=".7" fill="#c9b44a"/></svg>
<svg class="a" style="left:511.5px;top:136.3px;" width="9" height="9" viewBox="0 0 9 9"><rect x=".4" y=".2" width="8.2" height="6" rx=".4" fill="#2f6fe0"/><rect x="1.4" y="1" width="6.2" height="3.6" fill="#7ab4ff"/><rect x="3.4" y="6.2" width="2.2" height="1.2" fill="#333"/><rect x="1.6" y="7.4" width="5.8" height="1.2" fill="#444"/></svg>
<svg class="a" style="left:511.5px;top:148.0px;" width="9" height="9" viewBox="0 0 9 9"><path d="M1 4.200L5.4.6l3 1.8-4.2 4z" fill="#c9a66a"/><path d="M1 4.200v3l3.2 1.600V6.400z" fill="#8a5a2a"/><path d="M8.4 2.400v2.800L4.2 8.800V6.400z" fill="#a8783c"/><path d="M3 3.800l2.6-2 1.4.8-2.6 2.200z" fill="#f0e2c0"/></svg>
<svg class="a" style="left:511.5px;top:159.8px;" width="9" height="9" viewBox="0 0 9 9"><ellipse cx="4.5" cy="4.4" rx="4.2" ry="3.6" fill="#c8ccd4" stroke="#8e949e" stroke-width=".5"/><ellipse cx="4.5" cy="4.4" rx="1.3" ry="1.1" fill="#fff" stroke="#8e949e" stroke-width=".4"/><path d="M1 3.200c1-1.6 3-2.2 5-1.8" stroke="#f4f6fa" stroke-width=".9" fill="none"/></svg>
<svg class="a" style="left:511.5px;top:171.5px;" width="9" height="9" viewBox="0 0 9 9"><rect x="1" y=".4" width="1.2" height="8.4" fill="#444"/><rect x="2" y="1.4" width="6.6" height="5.6" fill="#3aa03a"/><rect x="4" y="2.6" width="3" height="2.2" fill="#153d1a"/><rect x="2.6" y="6.8" width="4.6" height="1" fill="#c9b44a"/></svg>
<svg class="a" style="left:511.5px;top:183.2px;" width="9" height="9" viewBox="0 0 9 9"><rect x="2.2" y=".8" width="4.6" height="2.6" fill="#f2f2f2" stroke="#9a9a9a" stroke-width=".4"/><rect x=".3" y="3.2" width="8.4" height="3" rx=".6" fill="#a9adb6" stroke="#70747c" stroke-width=".4"/><rect x="1.6" y="6" width="5.8" height="1.8" fill="#e9e9e9" stroke="#8a8a8a" stroke-width=".4"/></svg>
<svg class="a" style="left:511.5px;top:194.9px;" width="9" height="9" viewBox="0 0 9 9"><rect x="1" y=".4" width="2.4" height="5" rx="1" fill="#4a58c8"/><path d="M.4 8.400c.2-2.4 1.6-3.4 3.2-3.4 1.4 0 2 .6 2.6 1.600l2.4.4v1.600z" fill="#5a9a4a"/><circle cx="6.8" cy="6.8" r="1.4" fill="#7a52b8"/></svg>
<svg class="a" style="left:511.5px;top:206.7px;" width="9" height="9" viewBox="0 0 9 9"><path d="M.8.600l7.8 3.2-7.8 3.600z" fill="#1e7a28"/><rect x=".4" y=".3" width="1" height="8.4" fill="#0f3d14"/><path d="M1.4 2l4.4 1.8-4.4 2z" fill="#3fae48"/></svg>
<svg class="a" style="left:509px;top:225.3px;" width="11.5" height="12.5" viewBox="0 0 16 18"><path d="M5 3.200L9.6.6l5.2 3.200v9.600L9.8 16.6 5 13.600z" fill="#f4f4f2" stroke="#c4c4be" stroke-width=".6"/><path d="M9.8 6.200v10.4" stroke="#d4d4ce" stroke-width=".6"/><path d="M.8 13.200l4-2.6 3.4 2.4-3.8 3.200z" fill="#f08a1c" stroke="#c96a10" stroke-width=".4"/><path d="M10.6 8.400l3.6-2v6.200l-3.6 2.200z" fill="#fbe3c4" opacity=".8"/></svg>
<svg class="a" style="left:511.5px;top:240.8px;" width="9" height="9" viewBox="0 0 9 9"><path d="M.6 1.400c1.2-.6 2.2-.6 3.4 0v2.600c-1.2-.6-2.2-.6-3.4 0z" fill="#e8412a"/><path d="M4.6 1.400c1.2.6 2.4.6 3.8 0v2.600c-1.4.6-2.6.6-3.8 0z" fill="#48b03c"/><path d="M.6 4.800c1.2-.6 2.2-.6 3.4 0v2.800c-1.2-.6-2.2-.6-3.4 0z" fill="#2f6be0"/><path d="M4.6 4.800c1.2.6 2.4.6 3.8 0v2.800c-1.4.6-2.6.6-3.8 0z" fill="#f2c21c"/></svg>
<svg class="a" style="left:511.5px;top:252.5px;" width="9" height="9" viewBox="0 0 9 9"><path d="M1 2.600L5.6.4l3 3.4-3.6 4.800L.6 6.400z" fill="#fafafa" stroke="#c9a8a8" stroke-width=".5"/><circle cx="4.6" cy="4.4" r="1.5" fill="#e8412a"/></svg>
<svg class="a" style="left:511.5px;top:264.2px;" width="9" height="9" viewBox="0 0 9 9"><rect x="1.4" y="3.2" width="6.4" height="5.4" fill="#c9a05a" stroke="#8a6a2a" stroke-width=".4"/><path d="M2.2.4l2.6 2.2 2.4-2 .4 2.800H1.600z" fill="#3fae48"/><rect x="3.8" y="3.2" width="1.6" height="5.4" fill="#e8412a"/></svg>
<svg class="a" style="left:511.5px;top:275.9px;" width="9" height="9" viewBox="0 0 9 9"><path d="M2.4.6h3.200v2h2.600v6H.8V2.600h1.600z" fill="#e8c878" stroke="#b8944a" stroke-width=".4"/><rect x="2.6" y="1" width="2.8" height="3.6" fill="#f6e6b4"/></svg>
<svg class="a" style="left:511.5px;top:287.6px;" width="9" height="9" viewBox="0 0 9 9"><rect x=".3" y=".8" width="8.4" height="7.4" rx=".8" fill="#4a86e8" stroke="#2a5ab8" stroke-width=".5"/><rect x="1.4" y="2.6" width="6.2" height="4.6" fill="#eaf2ff"/><rect x="3.6" y="3.4" width="1.8" height="3" fill="#4a86e8"/></svg>
<svg class="a" style="left:511.5px;top:299.3px;" width="9" height="9" viewBox="0 0 9 9"><ellipse cx="4.5" cy="5.2" rx="3.6" ry="3.3" fill="#d8241c"/><circle cx="4.5" cy="1.8" r="1.4" fill="#2a1a1a"/><path d="M4.5 2.400v6" stroke="#5a0a0a" stroke-width=".6"/><circle cx="3" cy="5" r=".7" fill="#3a0a0a"/><circle cx="6" cy="5" r=".7" fill="#3a0a0a"/></svg>
<svg class="a" style="left:511.5px;top:311.0px;" width="9" height="9" viewBox="0 0 9 9"><path d="M1 1.600v6c0 1.4 7 1.4 7 0v-6z" fill="#b9bdc6" stroke="#6e727a" stroke-width=".4"/><ellipse cx="4.5" cy="1.6" rx="3.5" ry="1.2" fill="#e4e6ea" stroke="#6e727a" stroke-width=".4"/><path d="M1 3.600c0 1.4 7 1.4 7 0M1 5.600c0 1.4 7 1.4 7 0" fill="none" stroke="#6e727a" stroke-width=".5"/></svg>
<svg class="a" style="left:509px;top:328.6px;" width="12" height="13" viewBox="0 0 17 18"><path d="M5.2 1.200h8.200c1.4 0 2.2 1 2.2 2.200v10.800c0 1.2-.8 2-2 2H4.400c-1.2 0-2-.8-2-2V5z" fill="url(#gfold)" stroke="#c2a658" stroke-width=".6"/><path d="M11.6 1.400v14.6" stroke="#c9ad5c" stroke-width=".6"/><circle cx="5.6" cy="8.4" r="3.9" fill="#f6f7fa" stroke="#d2d4da" stroke-width=".9"/></svg>
<svg class="a" style="left:511.5px;top:344.9px;" width="9" height="9" viewBox="0 0 9 9"><path d="M.6 5.600L4 1l4.6 3.600L5 8.200z" fill="#e4e8f0" stroke="#a9b0c0" stroke-width=".5"/><path d="M2.4 5.200l2-2.4 2.2 1.8" fill="none" stroke="#8aa0d0" stroke-width=".7"/></svg>
<svg class="a" style="left:511.5px;top:356.6px;" width="9" height="9" viewBox="0 0 9 9"><path d="M2.4.8h3.400v1.800h2.400v4.600H.8V2.600h1.600z" fill="#e8c878" stroke="#b8944a" stroke-width=".4"/><path d="M.4 7.200c2-1.4 5-1.4 8.2 0v1.400H.4z" fill="#e0b080"/></svg>
<svg class="a" style="left:511.5px;top:368.3px;" width="9" height="9" viewBox="0 0 9 9"><rect x=".3" y="1" width="8.4" height="6.6" fill="#1c2a1c" stroke="#4a5a4a" stroke-width=".4"/><path d="M1 6l2-2.6 1.6 1.6 2-3 1.6 2" fill="none" stroke="#3fd048" stroke-width=".8"/></svg>
<svg class="a" style="left:511.5px;top:380.0px;" width="9" height="9" viewBox="0 0 9 9"><circle cx="3.2" cy="3.4" r="2.3" fill="none" stroke="#8a8f98" stroke-width="1.3"/><circle cx="6" cy="6" r="2" fill="none" stroke="#a4a9b2" stroke-width="1.2"/></svg>
<svg class="a" style="left:563px;top:91px;" width="3.5" height="2.5" viewBox="0 0 3.5 2.5"><path d="M0 .2h3.400L1.7 2.200z" fill="#333"/></svg>
<svg class="a" style="left:563.5px;top:230.5px;" width="3.5" height="2.5" viewBox="0 0 3.5 2.5"><path d="M0 .2h3.400L1.7 2.200z" fill="#333"/></svg>
<svg class="a" style="left:588.2px;top:334.2px;" width="3.5" height="2.5" viewBox="0 0 3.5 2.5"><path d="M0 .2h3.400L1.7 2.200z" fill="#333"/></svg>
<div class="a" style="left:108.5px;top:194.8px;width:4.3px;height:58.8px;background:linear-gradient(90deg,#f2f2f2 0,#d2d2d2 25%,#c6c6c6 60%,#b4b4b4 100%);border-radius:.6px"></div><svg class="a" style="left:109.5px;top:200px;" width="2.6" height="2" viewBox="0 0 2.6 2"><path d="M0 0h2.6L1.3 1.9z" fill="#1a2270"/></svg><svg class="a" style="left:109.5px;top:247.8px;" width="2.6" height="2" viewBox="0 0 2.6 2"><path d="M0 0h2.6L1.3 1.9z" fill="#1a2270"/></svg>
<svg class="a" style="left:4.2px;top:71.39999999999999px;" width="4.4" height="4.4" viewBox="0 0 4.4 4.4"><rect x=".3" y=".3" width="3.8" height="3.8" fill="#e2e6ed" stroke="#8e99ae" stroke-width=".8"/><path d="M1.1 2.2h2.2" stroke="#444" stroke-width=".7"/></svg>
<svg class="a" style="left:13px;top:70.0px;" width="8" height="7" viewBox="0 0 8 7"><rect x="3.4" y="0.2" width="3" height="2.6" fill="#2434c8"/><rect x="0.2" y="2.8" width="3.2" height="2.8" fill="#2434c8"/><rect x="4.4" y="3.8" width="2.8" height="2.2" fill="#6a78d8"/><path d="M2 2.8L4.4 1.6M6.2 3.8L5 2.4M3.4 4.6h1.2" stroke="#8a93c8" stroke-width=".6"/><rect x=".6" y="5.6" width="2.4" height=".8" fill="#9aa3d8"/><rect x="4.8" y="6" width="2.4" height=".7" fill="#b4bce4"/></svg>
<svg class="a" style="left:15.8px;top:81.35px;" width="4.4" height="4.4" viewBox="0 0 4.4 4.4"><rect x=".3" y=".3" width="3.8" height="3.8" fill="#e2e6ed" stroke="#8e99ae" stroke-width=".8"/><path d="M1.1 2.2h2.2" stroke="#444" stroke-width=".7"/></svg>
<svg class="a" style="left:24.5px;top:79.95px;" width="8" height="7" viewBox="0 0 8 7"><rect x="3.4" y="0.2" width="3" height="2.6" fill="#2434c8"/><rect x="0.2" y="2.8" width="3.2" height="2.8" fill="#2434c8"/><rect x="4.4" y="3.8" width="2.8" height="2.2" fill="#6a78d8"/><path d="M2 2.8L4.4 1.6M6.2 3.8L5 2.4M3.4 4.6h1.2" stroke="#8a93c8" stroke-width=".6"/><rect x=".6" y="5.6" width="2.4" height=".8" fill="#9aa3d8"/><rect x="4.8" y="6" width="2.4" height=".7" fill="#b4bce4"/></svg>
<svg class="a" style="left:35.5px;top:89.5px;" width="9" height="8.5" viewBox="0 0 9 8.5"><rect x="2" y="0.2" width="6" height="4.8" rx=".4" fill="#1f36cc"/><rect x="2.9" y="1" width="4.2" height="3" fill="#4868ee"/><path d="M0.4 7.6l2-2.6h5.600l.8 2.600z" fill="#2238b8"/><rect x="0.2" y="7.4" width="8.6" height=".9" fill="#8d99dd"/></svg>
<svg class="a" style="left:35.5px;top:99.44999999999999px;" width="9" height="8.5" viewBox="0 0 9 8.5"><rect x="2" y="0.2" width="6" height="4.8" rx=".4" fill="#1f36cc"/><rect x="2.9" y="1" width="4.2" height="3" fill="#4868ee"/><path d="M0.4 7.6l2-2.6h5.600l.8 2.600z" fill="#2238b8"/><rect x="0.2" y="7.4" width="8.6" height=".9" fill="#8d99dd"/></svg>
<svg class="a" style="left:35.5px;top:109.39999999999999px;" width="9" height="8.5" viewBox="0 0 9 8.5"><rect x="2" y="0.2" width="6" height="4.8" rx=".4" fill="#1f36cc"/><rect x="2.9" y="1" width="4.2" height="3" fill="#4868ee"/><path d="M0.4 7.6l2-2.6h5.600l.8 2.600z" fill="#2238b8"/><rect x="0.2" y="7.4" width="8.6" height=".9" fill="#8d99dd"/></svg>
<svg class="a" style="left:15.8px;top:121.14999999999999px;" width="4.4" height="4.4" viewBox="0 0 4.4 4.4"><rect x=".3" y=".3" width="3.8" height="3.8" fill="#e2e6ed" stroke="#8e99ae" stroke-width=".8"/><path d="M1.1 2.2h2.2" stroke="#444" stroke-width=".7"/></svg>
<svg class="a" style="left:24.5px;top:119.75px;" width="8" height="7" viewBox="0 0 8 7"><rect x="3.4" y="0.2" width="3" height="2.6" fill="#2434c8"/><rect x="0.2" y="2.8" width="3.2" height="2.8" fill="#2434c8"/><rect x="4.4" y="3.8" width="2.8" height="2.2" fill="#6a78d8"/><path d="M2 2.8L4.4 1.6M6.2 3.8L5 2.4M3.4 4.6h1.2" stroke="#8a93c8" stroke-width=".6"/><rect x=".6" y="5.6" width="2.4" height=".8" fill="#9aa3d8"/><rect x="4.8" y="6" width="2.4" height=".7" fill="#b4bce4"/></svg>
<svg class="a" style="left:35.5px;top:129.29999999999998px;" width="9" height="8.5" viewBox="0 0 9 8.5"><rect x="2" y="0.2" width="6" height="4.8" rx=".4" fill="#1f36cc"/><rect x="2.9" y="1" width="4.2" height="3" fill="#4868ee"/><path d="M0.4 7.6l2-2.6h5.600l.8 2.600z" fill="#2238b8"/><rect x="0.2" y="7.4" width="8.6" height=".9" fill="#8d99dd"/></svg>
<svg class="a" style="left:35.5px;top:139.25px;" width="9" height="8.5" viewBox="0 0 9 8.5"><rect x="2" y="0.2" width="6" height="4.8" rx=".4" fill="#1f36cc"/><rect x="2.9" y="1" width="4.2" height="3" fill="#4868ee"/><path d="M0.4 7.6l2-2.6h5.600l.8 2.600z" fill="#2238b8"/><rect x="0.2" y="7.4" width="8.6" height=".9" fill="#8d99dd"/></svg>
<svg class="a" style="left:35.5px;top:149.2px;" width="9" height="8.5" viewBox="0 0 9 8.5"><rect x="2" y="0.2" width="6" height="4.8" rx=".4" fill="#1f36cc"/><rect x="2.9" y="1" width="4.2" height="3" fill="#4868ee"/><path d="M0.4 7.6l2-2.6h5.600l.8 2.600z" fill="#2238b8"/><rect x="0.2" y="7.4" width="8.6" height=".9" fill="#8d99dd"/></svg>
<svg class="a" style="left:35.5px;top:159.14999999999998px;" width="9" height="8.5" viewBox="0 0 9 8.5"><rect x="2" y="0.2" width="6" height="4.8" rx=".4" fill="#1f36cc"/><rect x="2.9" y="1" width="4.2" height="3" fill="#4868ee"/><path d="M0.4 7.6l2-2.6h5.600l.8 2.600z" fill="#2238b8"/><rect x="0.2" y="7.4" width="8.6" height=".9" fill="#8d99dd"/></svg>
<svg class="a" style="left:35.5px;top:169.1px;" width="9" height="8.5" viewBox="0 0 9 8.5"><rect x="2" y="0.2" width="6" height="4.8" rx=".4" fill="#1f36cc"/><rect x="2.9" y="1" width="4.2" height="3" fill="#4868ee"/><path d="M0.4 7.6l2-2.6h5.600l.8 2.600z" fill="#2238b8"/><rect x="0.2" y="7.4" width="8.6" height=".9" fill="#8d99dd"/></svg>
<svg class="a" style="left:35.5px;top:179.04999999999998px;" width="9" height="8.5" viewBox="0 0 9 8.5"><rect x="2" y="0.2" width="6" height="4.8" rx=".4" fill="#1f36cc"/><rect x="2.9" y="1" width="4.2" height="3" fill="#4868ee"/><path d="M0.4 7.6l2-2.6h5.600l.8 2.600z" fill="#2238b8"/><rect x="0.2" y="7.4" width="8.6" height=".9" fill="#8d99dd"/></svg>
<svg class="a" style="left:15.8px;top:190.8px;" width="4.4" height="4.4" viewBox="0 0 4.4 4.4"><rect x=".3" y=".3" width="3.8" height="3.8" fill="#e2e6ed" stroke="#8e99ae" stroke-width=".8"/><path d="M1.1 2.2h2.2" stroke="#444" stroke-width=".7"/></svg>
<svg class="a" style="left:24.5px;top:189.4px;" width="8" height="7" viewBox="0 0 8 7"><rect x="3.4" y="0.2" width="3" height="2.6" fill="#2434c8"/><rect x="0.2" y="2.8" width="3.2" height="2.8" fill="#2434c8"/><rect x="4.4" y="3.8" width="2.8" height="2.2" fill="#6a78d8"/><path d="M2 2.8L4.4 1.6M6.2 3.8L5 2.4M3.4 4.6h1.2" stroke="#8a93c8" stroke-width=".6"/><rect x=".6" y="5.6" width="2.4" height=".8" fill="#9aa3d8"/><rect x="4.8" y="6" width="2.4" height=".7" fill="#b4bce4"/></svg>
<svg class="a" style="left:35.5px;top:198.95px;" width="9" height="8.5" viewBox="0 0 9 8.5"><rect x="2" y="0.2" width="6" height="4.8" rx=".4" fill="#1f36cc"/><rect x="2.9" y="1" width="4.2" height="3" fill="#4868ee"/><path d="M0.4 7.6l2-2.6h5.600l.8 2.600z" fill="#2238b8"/><rect x="0.2" y="7.4" width="8.6" height=".9" fill="#8d99dd"/></svg>
<svg class="a" style="left:35.5px;top:208.89999999999998px;" width="9" height="8.5" viewBox="0 0 9 8.5"><rect x="2" y="0.2" width="6" height="4.8" rx=".4" fill="#1f36cc"/><rect x="2.9" y="1" width="4.2" height="3" fill="#4868ee"/><path d="M0.4 7.6l2-2.6h5.600l.8 2.600z" fill="#2238b8"/><rect x="0.2" y="7.4" width="8.6" height=".9" fill="#8d99dd"/></svg>
<svg class="a" style="left:35.5px;top:218.85px;" width="9" height="8.5" viewBox="0 0 9 8.5"><rect x="2" y="0.2" width="6" height="4.8" rx=".4" fill="#1f36cc"/><rect x="2.9" y="1" width="4.2" height="3" fill="#4868ee"/><path d="M0.4 7.6l2-2.6h5.600l.8 2.600z" fill="#2238b8"/><rect x="0.2" y="7.4" width="8.6" height=".9" fill="#8d99dd"/></svg>
<svg class="a" style="left:15.8px;top:230.6px;" width="4.4" height="4.4" viewBox="0 0 4.4 4.4"><rect x=".3" y=".3" width="3.8" height="3.8" fill="#e2e6ed" stroke="#8e99ae" stroke-width=".8"/><path d="M1.1 2.2h2.2" stroke="#444" stroke-width=".7"/></svg>
<svg class="a" style="left:24.5px;top:229.2px;" width="8" height="7" viewBox="0 0 8 7"><rect x="3.4" y="0.2" width="3" height="2.6" fill="#2434c8"/><rect x="0.2" y="2.8" width="3.2" height="2.8" fill="#2434c8"/><rect x="4.4" y="3.8" width="2.8" height="2.2" fill="#6a78d8"/><path d="M2 2.8L4.4 1.6M6.2 3.8L5 2.4M3.4 4.6h1.2" stroke="#8a93c8" stroke-width=".6"/><rect x=".6" y="5.6" width="2.4" height=".8" fill="#9aa3d8"/><rect x="4.8" y="6" width="2.4" height=".7" fill="#b4bce4"/></svg>
<svg class="a" style="left:35.5px;top:238.74999999999997px;" width="9" height="8.5" viewBox="0 0 9 8.5"><rect x="2" y="0.2" width="6" height="4.8" rx=".4" fill="#1f36cc"/><rect x="2.9" y="1" width="4.2" height="3" fill="#4868ee"/><path d="M0.4 7.6l2-2.6h5.600l.8 2.600z" fill="#2238b8"/><rect x="0.2" y="7.4" width="8.6" height=".9" fill="#8d99dd"/></svg>
<svg class="a" style="left:35.5px;top:248.7px;" width="9" height="8.5" viewBox="0 0 9 8.5"><rect x="2" y="0.2" width="6" height="4.8" rx=".4" fill="#1f36cc"/><rect x="2.9" y="1" width="4.2" height="3" fill="#4868ee"/><path d="M0.4 7.6l2-2.6h5.600l.8 2.600z" fill="#2238b8"/><rect x="0.2" y="7.4" width="8.6" height=".9" fill="#8d99dd"/></svg>
</body></html>
